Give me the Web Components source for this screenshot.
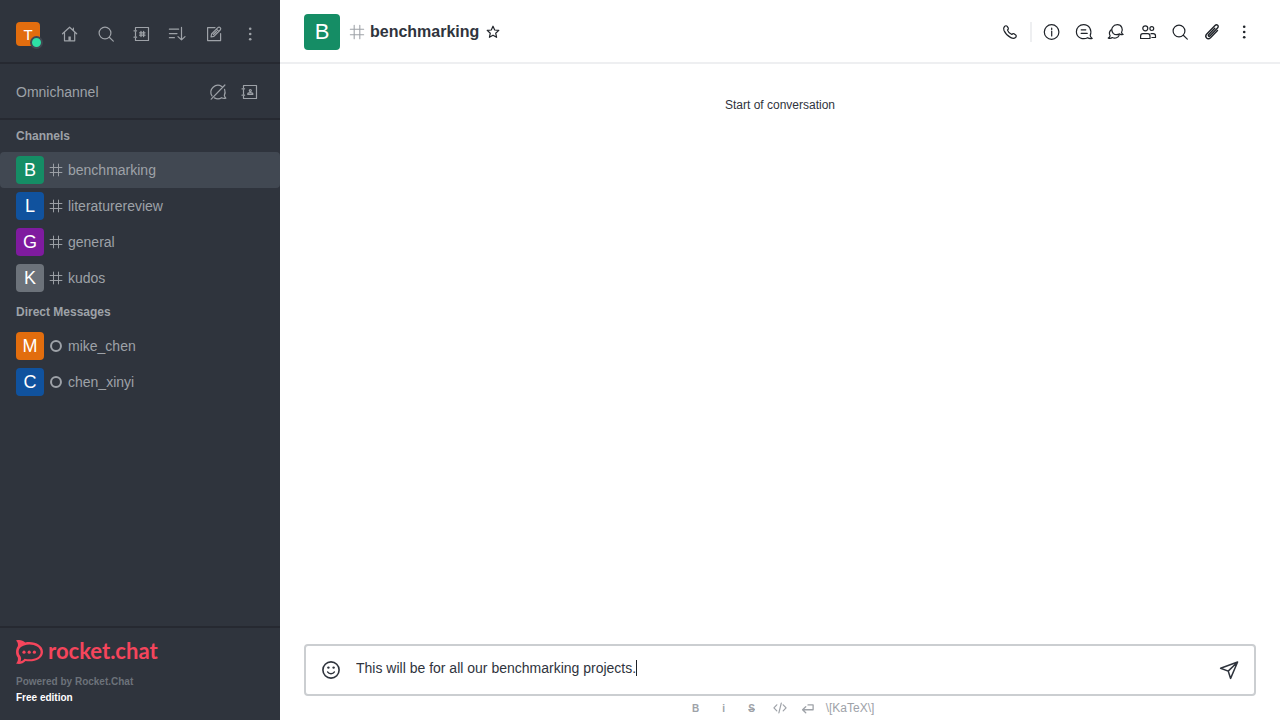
<!DOCTYPE html>
<html lang="en">
<head>
<meta charset="utf-8">
<meta name="viewport" content="width=device-width, initial-scale=1">
<title>benchmarking</title>
<style>
  body { margin: 0; font-family: "Liberation Sans", Arial, sans-serif; font-size: 14px; line-height: 20px; color: #2f343d; background: #fff; }
</style>
</head>
<body>
<rc-app>
  <rc-sidebar slot="sidebar">
    <rc-user-bar slot="top"></rc-user-bar>
    <rc-omnichannel slot="top"></rc-omnichannel>
    <rc-room-group label="Channels">
      <rc-room color="#158d65" icon="hash" selected>benchmarking</rc-room>
      <rc-room color="#10529e" icon="hash">literaturereview</rc-room>
      <rc-room color="#7f1b9f" icon="hash">general</rc-room>
      <rc-room color="#6c727a" icon="hash">kudos</rc-room>
    </rc-room-group>
    <rc-room-group label="Direct Messages">
      <rc-room color="#e26d0e" icon="offline">mike_chen</rc-room>
      <rc-room color="#10529e" icon="offline">chen_xinyi</rc-room>
    </rc-room-group>
    <rc-brand slot="bottom"></rc-brand>
  </rc-sidebar>
  <rc-room-header slot="main">benchmarking</rc-room-header>
  <rc-messages slot="main">Start of conversation</rc-messages>
  <rc-composer slot="main" value="This will be for all our benchmarking projects."></rc-composer>
</rc-app>

<script>
const ICONS = {
  home: '<path d="M2.5 9.8 9.6 3.2l7.1 6.6M4.5 8.5v8.3h10.2V8.5M13.4 6.4V4.2"/><path d="M8.4 16.8v-4.3h2.4v4.3z" fill="currentColor" stroke="none"/>',
  search: '<circle cx="9" cy="9" r="5.9"/><path d="m13.3 13.3 4 3.8"/>',
  directory: '<path d="M3.500 5.600V3.500h13v13h-13v-2.100M3.500 8.200v3.600M2 6.800h2.600M2 13.200h2.600"/><path stroke-width="1.300" d="M9 7.400v5.200M11.600 7.400v5.200M7.600 8.800h5.400M7.600 11.200h5.400"/>',
  contacts: '<path d="M3.500 5.600V3.500h13v13h-13v-2.100M3.500 8.200v3.600M2 6.800h2.600M2 13.200h2.600"/><circle cx="10.300" cy="8.500" r="1"/><path d="M7.800 12.400v-.6c0-.8 1-1.100 2.500-1.100s2.500.3 2.500 1.100v.6z"/>',
  sort: '<path d="M1.4 5.2h9.2M1.4 9.6H9M1.4 13.7h5M13.5 3.4v12.4M10 12.6l3.5 3.3 3.500-3.3"/>',
  edit: '<path d="M11 3.6H3.6v13h13V9.5"/><path d="m7 13 .6-3 6.3-6.3a1.6 1.6 0 0 1 2.3 2.3L9.9 12.4zM12.4 5.2l2.3 2.3M9.4 10.5l3-3"/>',
  kebab: '<g fill="currentColor" stroke="none"><circle cx="10.200" cy="4.700" r="1.300"/><circle cx="10.200" cy="10" r="1.300"/><circle cx="10.200" cy="15.200" r="1.300"/></g>',
  chatOff: '<path d="M16.6 7.4c.8 2.2.6 4.2-.3 6 .2 1 .8 2 1.5 2.8-1.6.4-3 .2-4.2-.5-2 1.3-4.8 1.4-7.2.2M4 13.9A7 7 0 0 1 13.8 4.4M16.9 3 3.2 17.2"/>',
  star: '<path d="m10 4.200 1.700 3.800 4.100.4-3.100 2.800.9 4.100-3.600-2.100-3.600 2.100.9-4.100-3.100-2.800 4.100-.4z"/>',
  phone: '<path d="M4.5 4.5c1-.9 2-1 2.700-.1l1.100 1.700c.4.8 0 1.400-.8 2 .6 1.900 2.200 3.600 4.300 4.400.7-.8 1.400-1.200 2.200-.7l1.700 1.200c.8.6.7 1.600-.2 2.500-1.200 1.100-2.800 1.100-4.700.1C7.900 14.200 5.300 11.500 4 8.500c-.6-1.600-.5-3 .5-4z"/>',
  info: '<circle cx="9.600" cy="10" r="7.300"/><path d="M9.700 9v5M9.700 6v1.500"/>',
  threads: '<path d="M16.200 13.500c.1 1 .9 2.100 2 2.900-1.800.4-3.400.1-4.600-.7-4.400 2.400-11.200.2-11.200-6 0-4.200 3.200-7.100 7.200-7.100 5.700 0 8.600 5.600 6.600 10.900zM7.200 7.800h4.600M7.200 11.400h6"/>',
  discussion: '<path d="M7.200 11.300C3.700 6.600 7.500 2.700 11.300 2.700c4.600 0 6 4.800 4.200 7.800.2.700.8 1.500 1.600 2-1.200.3-2.500 0-3.300-.6-2.600 1.200-5.100.9-6.600-.6z"/><path d="M5.200 7.700c-1.800 1.500-2.200 3.900-1.100 6.100-.2.900-.8 1.700-1.800 2.300 1.500.4 3 .2 4-.6 3 1.400 5.900.2 6.900-2.400"/>',
  team: '<circle cx="7.300" cy="6.300" r="2.500"/><circle cx="13.800" cy="6.600" r="1.900"/><path d="M2.600 16.500v-2.300c0-1.600.8-2.500 2.200-2.500h5c1.400 0 2.200.9 2.200 2.500v2.300zM13 11.700h2.200c1.500 0 2.300.8 2.300 2.100v1.700h-3.600"/>',
  clip: '<path stroke-width="1.400" d="m12.800 6.200-6.200 6.500c-.8.900.3 2 1.200 1.200l7.700-7.800c2-2.300-.7-4.300-2.500-2.500l-8.200 8.300c-2.800 3.100 1 6.400 3.700 3.800l7-7.200"/>',
  smile: '<g stroke-width="1.600"><circle cx="10" cy="10" r="8.100"/><path d="M6.700 12c1.200 2.300 5.400 2.300 6.600 0"/></g><g fill="currentColor" stroke="none"><circle cx="7.400" cy="7.600" r="1.200"/><circle cx="12.600" cy="7.600" r="1.200"/></g>',
  send: '<path stroke-width="1.500" d="M1.600 8.200 18.600 2l-7 16.400-2.400-7.300zM9.200 11.100l9.400-9.100"/>',
  code: '<path stroke-width="1.500" d="M6 6 2.400 9.800 6 13.600M14 6l3.600 3.800-3.600 3.800M11.600 3.800 8.600 16"/>',
  enter: '<path stroke-width="1.600" d="M10 6.200h6.400v6H3.500M7.200 8.400l-4 3.800 4 3.800"/>',
  hash: '<path d="M6.875 2.600v14.800M13.125 2.600v14.800M2.600 6.875h14.800M2.600 13.125h14.800"/>',
  offline: '<circle cx="10" cy="10" r="6.200" stroke-width="2.500"/>'
};

function define(name, html, setup) {
  const template = document.createElement('template');
  template.innerHTML = `<style>
    :host { display: block; box-sizing: border-box; }
    *, *::before { box-sizing: border-box; }
  </style>${html}`;
  customElements.define(name, class extends HTMLElement {
    connectedCallback() {
      if (this.shadowRoot) return;
      this.attachShadow({ mode: 'open' }).append(template.content.cloneNode(true));
      if (setup) setup(this, this.shadowRoot);
    }
  });
}

define('rc-icon', `<style>
  :host { display: block; width: var(--icon-size, 20px); height: var(--icon-size, 20px); flex: none; }
  svg { display: block; width: 100%; height: 100%; fill: none; stroke: currentColor; stroke-width: 1.2; stroke-linejoin: round; stroke-linecap: round; }
</style><svg viewBox="0 0 20 20" aria-hidden="true"></svg>`, (el, root) => {
  root.querySelector('svg').innerHTML = ICONS[el.getAttribute('name')] || '';
});

define('rc-button', `<style>
  :host { flex: none; }
  button { display: flex; align-items: center; justify-content: center; width: var(--button-size, 28px); height: var(--button-size, 28px); padding: 0; border: 0; border-radius: 4px; background: none; color: inherit; font: inherit; cursor: pointer; }
</style><button type="button"><slot></slot></button>`, (el, root) => {
  const button = root.querySelector('button');
  button.setAttribute('aria-label', el.getAttribute('label'));
  if (el.hasAttribute('icon')) {
    const icon = document.createElement('rc-icon');
    icon.setAttribute('name', el.getAttribute('icon'));
    button.append(icon);
  }
});

define('rc-avatar', `<style>
  :host { display: flex; align-items: center; justify-content: center; flex: none; width: var(--avatar-size, 28px); height: var(--avatar-size, 28px); border-radius: 4px; color: #fff; font-size: var(--avatar-font, 18px); line-height: 1; font-weight: 400; }
</style><slot></slot>`, el => { el.style.background = el.getAttribute('color'); });

define('rc-app', `<style>
  :host { display: flex; min-height: 100vh; }
  main { display: flex; flex-direction: column; flex: 1; min-width: 0; }
</style><slot name="sidebar"></slot><main><slot name="main"></slot></main>`);

define('rc-sidebar', `<style>
  :host { display: flex; flex-direction: column; flex: none; width: 280px; background: #2f343d; color: #9ea2a8; --rule: #262931; }
  nav { flex: 1; }
</style><slot name="top"></slot><nav aria-label="Rooms"><slot></slot></nav><slot name="bottom"></slot>`);

define('rc-user-bar', `<style>
  :host { display: flex; align-items: center; gap: 8px; padding: 20px 16px 14px; border-bottom: 2px solid var(--rule); }
  .me { position: relative; margin-right: 8px; --avatar-size: 24px; --avatar-font: 15px; }
  .status { position: absolute; right: -3px; bottom: -3px; width: 13px; height: 13px; border: 2px solid #414852; border-radius: 50%; background: #2de0a5; }
</style>
<div class="me"><rc-avatar color="#e26d0e">T</rc-avatar><span class="status"></span></div>
<rc-button icon="home" label="Home"></rc-button>
<rc-button icon="search" label="Search"></rc-button>
<rc-button icon="directory" label="Directory"></rc-button>
<rc-button icon="sort" label="Display"></rc-button>
<rc-button icon="edit" label="Create new"></rc-button>
<rc-button icon="kebab" label="Administration"></rc-button>`);

define('rc-omnichannel', `<style>
  :host { display: flex; align-items: center; gap: 4px; padding: 14px 16px 12px; border-bottom: 2px solid var(--rule); }
  span { flex: 1; }
</style><span>Omnichannel</span>
<rc-button icon="chatOff" label="Not available"></rc-button>
<rc-button icon="contacts" label="Contact center"></rc-button>`);

define('rc-room-group', `<style>
  h2 { margin: 0; padding: 0 16px; font-size: 12px; line-height: 32px; font-weight: 700; }
</style><section><h2></h2><slot></slot></section>`, (el, root) => {
  root.querySelector('h2').textContent = el.getAttribute('label');
});

define('rc-room', `<style>
  a { display: flex; align-items: center; gap: 4px; height: 36px; padding: 0 16px; color: inherit; text-decoration: none; border-radius: 4px; --icon-size: 16px; }
  :host([selected]) a { background: #414852; }
</style><a href="#"><rc-avatar></rc-avatar><rc-icon></rc-icon><span><slot></slot></span></a>`, (el, root) => {
  const avatar = root.querySelector('rc-avatar');
  avatar.style.background = el.getAttribute('color');
  avatar.textContent = el.textContent[0].toUpperCase();
  const icon = document.createElement('rc-icon');
  icon.setAttribute('name', el.getAttribute('icon'));
  root.querySelector('rc-icon').replaceWith(icon);
});

define('rc-brand', `<style>
  :host { padding: 12px 16px 14px; border-top: 2px solid var(--rule); font-size: 10px; line-height: 16px; font-weight: 700; }
  a { display: flex; align-items: center; gap: 5px; height: 24px; margin-bottom: 10px; color: #f5455c; text-decoration: none; font: 700 22px/22px Lato, sans-serif; }
  a span { height: 24px; }
  svg { display: block; width: 27px; height: 24px; }
  .powered { color: #6c727a; }
  .edition { color: #fff; }
</style>
<a href="#"><svg viewBox="0 0 27 24" aria-hidden="true">
  <path fill="currentColor" fill-rule="evenodd" d="M0 .5C3.5-.6 7 .3 9.2 2.500 18 .7 27 5 27 12S18 22.500 9.500 21C7 23.700 3.500 24.500 0 23.500 1.800 21.500 2.200 19.500 1.800 17.600-.6 14.500-.6 9.500 1.800 6.300 2.300 4.200 1.800 2.300 0 .5zM4.400 7.600C1.800 10.500 2.300 14 4.600 16.400 5.400 18.200 5.200 19.900 4.400 21.400 6 21 7.400 20.100 8.500 18.700 16.500 20.700 24.600 18 24.600 12 24.600 6 15 2.800 8 5.500 6.300 6 5.200 6.700 4.400 7.600z"/>
  <g fill="currentColor"><circle cx="8" cy="12.200" r="1.600"/><circle cx="13.200" cy="12.200" r="1.600"/><circle cx="18.400" cy="12.200" r="1.600"/></g>
</svg><span>rocket.chat</span></a>
<div class="powered">Powered by Rocket.Chat</div>
<div class="edition">Free edition</div>`);

define('rc-room-header', `<style>
  header { display: flex; align-items: center; height: 64px; padding: 2px 22px 0 24px; border-bottom: 2px solid #eeeff1; --avatar-size: 36px; --avatar-font: 22px; color: #1f2329; }
  .hash { --icon-size: 18px; margin: 0 4px 0 8px; color: #9ea2a8; }
  h1 { flex: none; margin: 0; font-size: 16px; line-height: 24px; font-weight: 700; color: #2f343d; }
  .tools { display: flex; align-items: center; gap: 4px; margin-left: auto; }
  .divider { width: 2px; height: 20px; margin: 0 2px; background: #eeeff1; }
</style>
<header><rc-avatar color="#158d65">B</rc-avatar><rc-icon class="hash" name="hash"></rc-icon><h1><slot></slot></h1>
<rc-button icon="star" label="Favorite"></rc-button>
<div class="tools">
<rc-button icon="phone" label="Call"></rc-button><span class="divider"></span>
<rc-button icon="info" label="Room information"></rc-button>
<rc-button icon="threads" label="Threads"></rc-button>
<rc-button icon="discussion" label="Discussions"></rc-button>
<rc-button icon="team" label="Members"></rc-button>
<rc-button icon="search" label="Search messages"></rc-button>
<rc-button icon="clip" label="Files"></rc-button>
<rc-button icon="kebab" label="Options"></rc-button>
</div></header>`);

define('rc-messages', `<style>
  :host { flex: 1; padding: 32px 24px; text-align: center; font-size: 12px; line-height: 18px; }
</style><slot></slot>`);

define('rc-composer', `<style>
  :host { padding: 0 24px; }
  .box { display: flex; align-items: center; gap: 11px; padding: 10px 11px; border: 2px solid #cbced1; border-radius: 4px; }
  .field { display: flex; align-items: center; flex: 1; min-width: 0; height: 28px; padding-bottom: 4px; }
  textarea { field-sizing: content; max-width: 100%; height: 20px; padding: 0; border: 0; outline: 0; resize: none; overflow: hidden; background: none; color: #2f343d; font: inherit; line-height: 20px; caret-color: transparent; }
  .caret { flex: none; width: 1px; height: 16px; background: #1f2329; }
  .formats { display: flex; align-items: center; justify-content: center; gap: 8px; height: 24px; color: #9ea2a8; font-size: 12px; line-height: 16px; --button-size: 20px; --icon-size: 16px; }
  .glyph { font-size: 10px; padding-top: 1px; }
  b, s { font-weight: 700; }
  .formats a { color: inherit; text-decoration: none; }
</style>
<div class="box"><rc-button icon="smile" label="Emoji"></rc-button>
<div class="field"><textarea rows="1" aria-label="Message"></textarea><span class="caret"></span></div>
<rc-button icon="send" label="Send"></rc-button></div>
<div class="formats">
<rc-button class="glyph" label="Bold"><b>B</b></rc-button>
<rc-button class="glyph" label="Italic"><b>i</b></rc-button>
<rc-button class="glyph" label="Strike"><s>S</s></rc-button>
<rc-button icon="code" label="Code"></rc-button>
<rc-button icon="enter" label="Multi-line"></rc-button>
<a href="#">\\[KaTeX\\]</a>
</div>`, (el, root) => { root.querySelector('textarea').value = el.getAttribute('value'); });
</script>
</body>
</html>
